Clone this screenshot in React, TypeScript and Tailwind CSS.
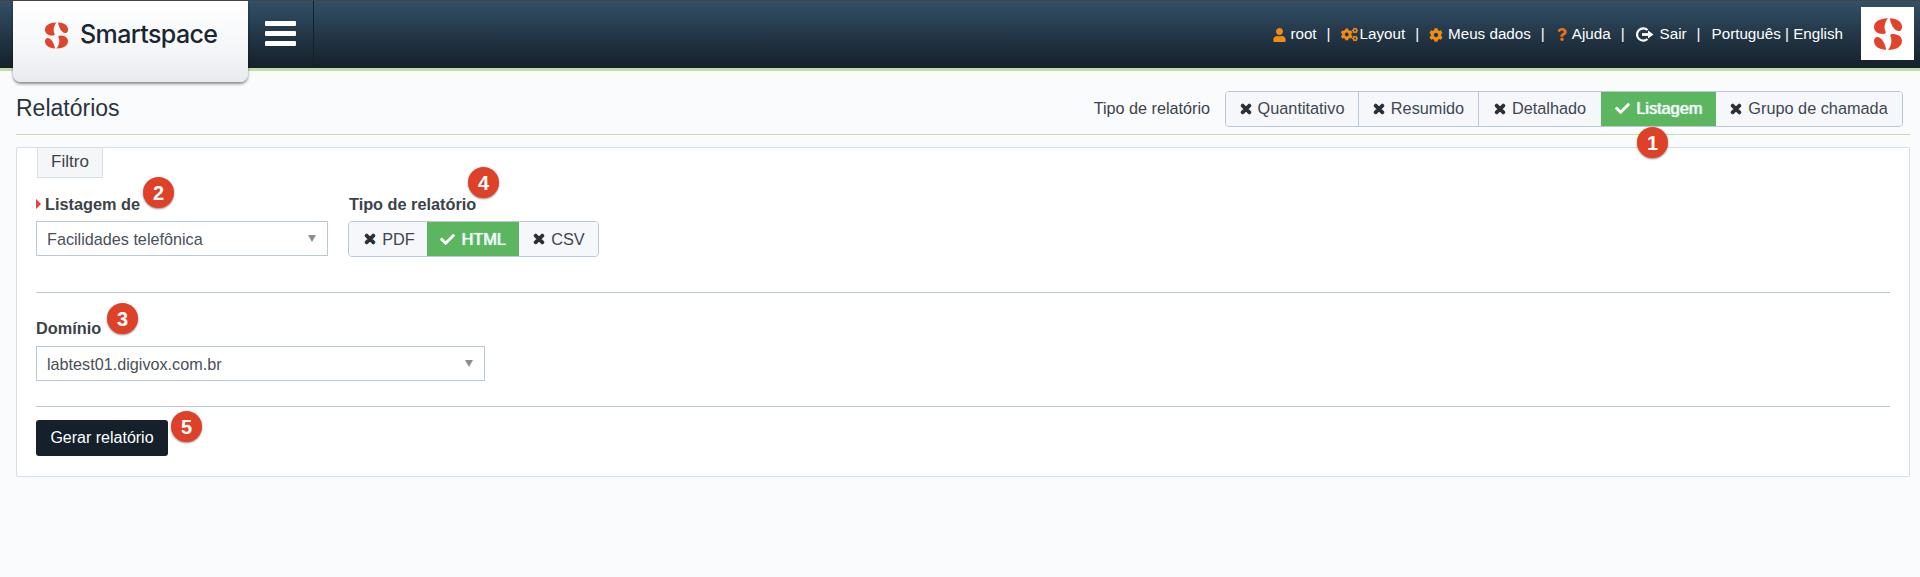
import { FaCheck, FaCog, FaCogs, FaQuestion, FaTimes, FaUser } from "react-icons/fa";

const font = "font-['Liberation_Sans',Arial,sans-serif]";

function SLogo({ className }: { className: string }) {
  return (
    <svg viewBox="0 0 24 27" className={className} fill="#e0442a">
      <path d="M12 0C4.5 0 0 3 0 7.8C0 11 2.8 13.4 7.5 13.6C10 13.7 10.5 12.6 9.8 11.2C8.4 8.4 9 3.5 12 0Z" />
      <path d="M13.5 0C20 0.2 24 3 24 7.4C24 9.8 22.6 11.2 20.8 11C17 10.5 14.5 5 13.5 0Z" />
      <path d="M10.5 27C4 26.8 0 24 0 19.6C0 17.2 1.4 15.8 3.2 16C7 16.5 9.5 22 10.5 27Z" />
      <path d="M12 27C19.5 27 24 24 24 19.2C24 16 21.2 13.6 16.5 13.4C14 13.3 13.5 14.4 14.2 15.8C15.6 18.6 15 23.5 12 27Z" />
    </svg>
  );
}

function Badge({ n, className }: { n: number; className: string }) {
  return (
    <span
      className={`absolute flex h-[31px] w-[31px] items-center justify-center rounded-full bg-[#de4128] text-[20px] font-bold text-white shadow-[0_1px_2px_rgba(0,0,0,0.45)] ${className}`}
    >
      {n}
    </span>
  );
}

function Sep() {
  return <span className="mx-[10px]">|</span>;
}

function SegButton({ label, active, className = "" }: { label: string; active?: boolean; className?: string }) {
  return (
    <span
      className={`flex h-full items-center justify-center gap-[6px] text-[16.3px] ${
        active ? "bg-[#5cb660] text-white [text-shadow:1px_0_1px_rgba(255,255,255,0.85)]" : "bg-[#f5f7fa] text-[#3f4650]"
      } ${className}`}
    >
      {active ? (
        <FaCheck className="h-[15px] w-[15px]" />
      ) : (
        <FaTimes className="h-[14px] w-[12px] text-[#2b3036]" stroke="currentColor" strokeWidth={40} />
      )}
      {label}
    </span>
  );
}

function Select({ value, className }: { value: string; className: string }) {
  return (
    <div className={`flex h-[35px] items-center justify-between border border-[#b8c8d8] bg-white pl-[10px] pr-[11px] text-[16.2px] text-[#4a5058] ${className}`}>
      <span className="pt-[2px]">{value}</span>
      <span className="h-0 w-0 border-x-[4.5px] border-t-[7px] border-x-transparent border-t-[#8a8f95]" />
    </div>
  );
}

export default function App() {
  return (
    <div className={`${font} min-h-[577px] bg-[#f9fbfd] text-[#3c4249]`}>
      <header className="relative h-[71px] border-t border-b-[3px] border-t-[#444] border-b-[#c2dfaa] bg-gradient-to-b from-[#325067] to-[#15202a]">
        <div className="flex h-full items-start">
          <div className="relative z-10 ml-[13px] flex h-[81px] w-[235px] items-center gap-[12px] rounded-b-[8px] bg-gradient-to-b from-white via-[#f7f8fa] to-[#e8ebef] pb-[13px] pl-[32px] shadow-[0_2px_3px_rgba(0,0,0,0.45)]">
            <SLogo className="h-[27px] w-[23px]" />
            <span className="font-['Inter',sans-serif] text-[25px] font-medium tracking-[-0.6px] text-[#1a2630]">Smartspace</span>
          </div>
          <div className="ml-[17px] mt-[20px] flex h-[25px] w-[31px] flex-col justify-between">
            <span className="h-[5px] rounded-[1px] bg-white" />
            <span className="h-[5px] rounded-[1px] bg-white" />
            <span className="h-[5px] rounded-[1px] bg-white" />
          </div>
          <div className="ml-[17px] h-full w-px bg-[#14202a]" />
          <div className="ml-auto mr-[6px] flex h-full items-center text-[15.2px] text-white">
            <FaUser className="mr-[4px] h-[14px] w-[13px] text-[#f28c13]" />
            root
            <Sep />
            <FaCogs className="mr-[2px] h-[15px] w-[17px] text-[#f28c13]" />
            Layout
            <Sep />
            <FaCog className="mr-[5px] h-[14px] w-[14px] text-[#f28c13]" />
            Meus dados
            <Sep />
            <FaQuestion className="ml-[2px] mr-[5px] h-[13px] w-[10px] text-[#f26f13]" />
            Ajuda
            <Sep />
            <svg viewBox="0 0 19 15" className="mr-[6px] h-[15px] w-[19px]" fill="none" stroke="white" strokeWidth="2.2">
              <path d="M12.5 3A6.2 6.2 0 1 0 12.5 12" />
              <path d="M7 7.5H14" strokeWidth="2.8" />
              <path d="M13 3.5L18.5 7.5L13 11.5Z" fill="white" stroke="none" />
            </svg>
            Sair
            <Sep />
            <span className="ml-[1px]">Português | English</span>
            <div className="mb-[2px] ml-[18px] flex h-[53px] w-[53px] items-center justify-center bg-white">
              <SLogo className="h-[36px] w-[28px]" />
            </div>
          </div>
        </div>
      </header>

      <div className="pl-[16px] pr-[10px]">
        <div className="relative flex h-[64px] items-center justify-between border-b border-[#c2dfaa] pr-[7px] pt-[12px]">
          <h1 className="text-[23px] leading-none text-[#2b333b]">Relatórios</h1>
          <div className="flex items-center gap-[15px]">
            <span className="text-[16.2px]">Tipo de relatório</span>
            <div className="flex h-[36px] overflow-hidden rounded-[4px] border border-[#b8c8d8]">
              <SegButton label="Quantitativo" className="w-[133px] border-r border-[#b8c8d8]" />
              <SegButton label="Resumido" className="w-[120px] border-r border-[#b8c8d8]" />
              <SegButton label="Detalhado" className="w-[122px]" />
              <SegButton label="Listagem" active className="w-[115px]" />
              <SegButton label="Grupo de chamada" className="w-[186px]" />
            </div>
          </div>
          <Badge n={1} className="left-[1621px] top-[56px] z-10" />
        </div>

        <section className="relative mt-[12px] h-[330px] rounded-[2px] border border-[#d5dfe9] bg-white px-[19px]">
          <div className="ml-[1px] flex h-[30px] w-[66px] items-center justify-center border border-t-0 border-[#d5dfe9] bg-[#f5f6f8] pb-[2px] text-[17px]">
            Filtro
          </div>
          <div className="mt-[13px] flex gap-[20px]">
            <div className="relative w-[292px]">
              <label className="flex h-[24px] items-center pt-[2px] text-[16.3px] font-bold">
                <span className="mr-[4px] h-0 w-0 border-y-[5px] border-l-[5px] border-y-transparent border-l-[#ef3a3a]" />
                Listagem de
              </label>
              <Select value="Facilidades telefônica" className="mt-[6px] w-[292px]" />
              <Badge n={2} className="left-[107px] top-[-14px]" />
            </div>
            <div className="relative">
              <label className="flex h-[24px] items-center pl-[1px] pt-[2px] text-[16.3px] font-bold">Tipo de relatório</label>
              <div className="mt-[6px] flex h-[36px] overflow-hidden rounded-[4px] border border-[#b8c8d8]">
                <SegButton label="PDF" className="w-[78px] pl-[3px]" />
                <SegButton label="HTML" active className="w-[92px]" />
                <SegButton label="CSV" className="w-[79px] pl-[1px]" />
              </div>
              <Badge n={4} className="left-[120px] top-[-24px]" />
            </div>
          </div>

          <hr className="mt-[35px] border-[#b8c8d8]" />

          <div className="relative mt-[22px]">
            <label className="flex h-[24px] items-center pt-[2px] text-[16.3px] font-bold">Domínio</label>
            <Select value="labtest01.digivox.com.br" className="mt-[7px] w-[449px]" />
            <Badge n={3} className="left-[71px] top-[-12px]" />
          </div>

          <hr className="mt-[25px] border-[#b8c8d8]" />

          <div className="relative mt-[13px]">
            <button className="h-[36px] w-[132px] rounded-[3px] bg-[#15202a] text-[16px] text-white">Gerar relatório</button>
            <Badge n={5} className="left-[135px] top-[-9px]" />
          </div>
        </section>
      </div>
    </div>
  );
}
